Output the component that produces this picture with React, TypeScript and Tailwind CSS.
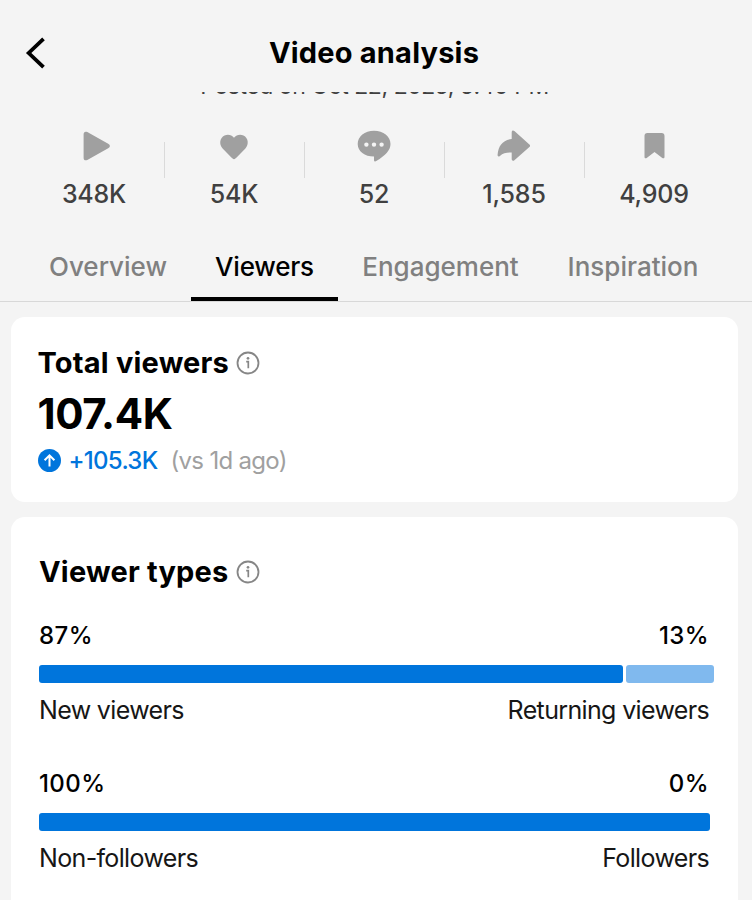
import type { ReactNode } from "react";
import clsx from "clsx";

type Stat = { value: string; icon: ReactNode };

const stats: Stat[] = [
  {
    value: "348K",
    icon: (
      <path d="M7.600 6.300c0-2.400 1.700-3.200 3.700-2.200l20.900 11.700c2.300 1.300 2.300 3.200 0 4.500l-20.900 11.600c-2 1-3.700.2-3.700-2.200z" />
    ),
  },
  {
    value: "54K",
    icon: (
      <path d="M18 31.200c-1 0-1.800-.8-2.600-1.600L6.600 20.400C2.800 16.400 3.700 10 8.500 7.600c3.400-1.700 7.200-.7 9.500 2.200 2.300-2.900 6.100-3.900 9.500-2.200 4.800 2.400 5.700 8.800 1.900 12.800l-8.800 9.200c-.8.8-1.600 1.600-2.600 1.600z" />
    ),
  },
  {
    value: "52",
    icon: (
      <path
        fillRule="evenodd"
        d="M18 2.800c9.400 0 16.500 5.600 16.500 13.200 0 6.200-4.800 11.300-14.200 17-1.300.8-2.300.3-2.300-1.100v-3.300C8.700 28.600 1.700 23.400 1.700 16S8.700 2.800 18 2.800zM10.400 14.400a2.200 2.200 0 1 0 0 4.400 2.200 2.200 0 0 0 0-4.400zm7.600 0a2.200 2.200 0 1 0 0 4.400 2.200 2.200 0 0 0 0-4.400zm7.600 0a2.200 2.200 0 1 0 0 4.400 2.200 2.200 0 0 0 0-4.400z"
      />
    ),
  },
  {
    value: "1,585",
    icon: (
      <path d="M15.700 4.200c0-1.700 1.500-2.300 2.700-1.100l15 13.400c.9.800.9 1.700 0 2.500l-15 13.200c-1.200 1.200-2.700.6-2.700-1.100v-6.500c-5.200-.1-8.600.8-11.800 3.300-1.400 1.100-2.500.5-2.300-1.300.8-8.800 5-14.700 14.100-15.700z" />
    ),
  },
  {
    value: "4,909",
    icon: (
      <path d="M8.500 8.100c0-1.900 1-3 2.900-3h14.200c1.900 0 2.900 1.100 2.900 3v20.600c0 1.500-1 2-2.200 1.200L18.500 24l-7.800 5.900c-1.200.8-2.200.3-2.200-1.200z" />
    ),
  },
];

const tabs = [
  { label: "Overview", className: "w-[166px]" },
  { label: "Viewers", className: "w-[147px]" },
  { label: "Engagement", className: "w-[205px]" },
  { label: "Inspiration", className: "w-[180px]" },
];

function InfoIcon() {
  return (
    <svg width="24" height="24" viewBox="0 0 24 24" fill="none" stroke="#868686">
      <circle cx="12" cy="12" r="10.500" strokeWidth="1.800" />
      <path d="M10.200 10.600h2.100v6.600" strokeWidth="1.700" />
      <circle cx="12" cy="7.300" r="1.350" fill="#868686" stroke="none" />
    </svg>
  );
}

function Header() {
  return (
    <header className="flex h-[92px] items-center px-6 pt-[14px]">
      <svg
        width="22"
        height="34"
        viewBox="0 0 22 34"
        fill="none"
        stroke="#000"
        strokeWidth="3.800"
      >
        <path d="M19.500 2.800 4.700 17l14.800 14.200" />
      </svg>
      <h1 className="flex-1 pr-[26px] text-center text-[29px] leading-9 font-bold tracking-[0.2px]">
        Video analysis
      </h1>
    </header>
  );
}

function StatsRow() {
  return (
    <div className="flex h-[104px] pt-[18px] pl-6">
      {stats.map(({ value, icon }, i) => (
        <div key={value} className="flex w-[140px] items-start">
          <div className="flex flex-1 flex-col items-center">
            <svg width="36" height="36" viewBox="0 0 36 36" fill="#a0a0a0">
              {icon}
            </svg>
            <span className="mt-[14px] text-[25px] leading-8 font-medium tracking-[-0.2px] text-[#404040]">
              {value}
            </span>
          </div>
          {i < stats.length - 1 && (
            <div className="mt-[14px] -mr-px h-9 w-px bg-[#dadada]" />
          )}
        </div>
      ))}
    </div>
  );
}

function Tabs({ active }: { active: string }) {
  return (
    <nav className="flex h-[99px] items-end border-b border-[#d8d8d8] pl-[25px]">
      {tabs.map(({ label, className }) => (
        <button
          key={label}
          className={clsx(
            "flex h-[50px] items-start justify-center border-b-4 text-[26px] leading-8 font-medium",
            className,
            label === active
              ? "border-black tracking-[-0.2px] text-black"
              : "border-transparent text-[#808080]"
          )}
        >
          {label}
        </button>
      ))}
    </nav>
  );
}

type Side = { percent: number; label: string };

function SplitBar({ left, right }: { left: Side; right: Side }) {
  return (
    <div>
      <div className="flex justify-between pr-[5px] text-[24px] leading-8 font-medium tracking-[0.4px]">
        <span>{left.percent}%</span>
        <span>{right.percent}%</span>
      </div>
      <div className="mt-[13px] flex h-[18px] gap-[3px]">
        <div
          className="rounded-[3px] bg-[#0075dc]"
          style={{ width: right.percent ? 584 : 671 }}
        />
        {right.percent > 0 && (
          <div className="w-[87.5px] rounded-[3px] bg-[#80b9ee]" />
        )}
      </div>
      <div className="mt-[11px] flex justify-between pr-[5px] text-[25px] leading-8 tracking-[-0.65px] text-[#161616]">
        <span>{left.label}</span>
        <span>{right.label}</span>
      </div>
    </div>
  );
}

export default function App() {
  return (
    <div className="h-[900px] w-[752px] overflow-hidden bg-[#f4f4f4] font-[Inter,'Liberation_Sans',sans-serif] text-black">
      <Header />
      {/* Scrolled under the header, only the feet of the letters show */}
      <div className="h-[11px] overflow-hidden">
        <p className="-mt-[22px] pr-[3px] text-center text-[23px] leading-8 tracking-[-0.45px] text-[#404040]">
          Posted on Oct 22, 2025, 5:40 PM
        </p>
      </div>
      <div className="pt-[7px]">
        <StatsRow />
      </div>
      <div className="-mt-[11px]">
        <Tabs active="Viewers" />
      </div>

      <main className="flex flex-col gap-[15px] pt-[15px] pr-[14px] pl-[11px]">
        <section className="h-[185px] rounded-[14px] bg-white px-[26.5px] pt-7">
          <div className="flex items-center gap-[7px]">
            <h2 className="text-[29px] leading-9 font-bold tracking-[0.2px]">
              Total viewers
            </h2>
            <InfoIcon />
          </div>
          <p className="mt-2 text-[42px] leading-[50px] font-bold tracking-[-0.4px]">
            107.4K
          </p>
          <div className="mt-[6px] flex items-center text-[24px] leading-8 tracking-[-0.7px]">
            <svg
              className="-mt-px"
              width="23"
              height="23"
              viewBox="0 0 23 23"
              fill="none"
            >
              <circle cx="11.500" cy="11.500" r="11.500" fill="#0075dc" />
              <path
                d="M11.500 17.600V6.400M6.600 11.200l4.900-4.900 4.900 4.900"
                stroke="#fff"
                strokeWidth="2"
              />
            </svg>
            <span className="ml-2 font-medium text-[#0075dc]">+105.3K</span>
            <span className="ml-[13px] text-[#a0a0a0]">(vs 1d ago)</span>
          </div>
        </section>

        <section className="h-[400px] rounded-[14px] bg-white pt-[37px] pl-7">
          <div className="flex items-center gap-[7px]">
            <h2 className="text-[29px] leading-9 font-bold tracking-[0.2px]">
              Viewer types
            </h2>
            <InfoIcon />
          </div>
          <div className="mt-[30px] flex w-[675px] flex-col gap-[42px]">
            <SplitBar
              left={{ percent: 87, label: "New viewers" }}
              right={{ percent: 13, label: "Returning viewers" }}
            />
            <SplitBar
              left={{ percent: 100, label: "Non-followers" }}
              right={{ percent: 0, label: "Followers" }}
            />
          </div>
        </section>
      </main>
    </div>
  );
}
